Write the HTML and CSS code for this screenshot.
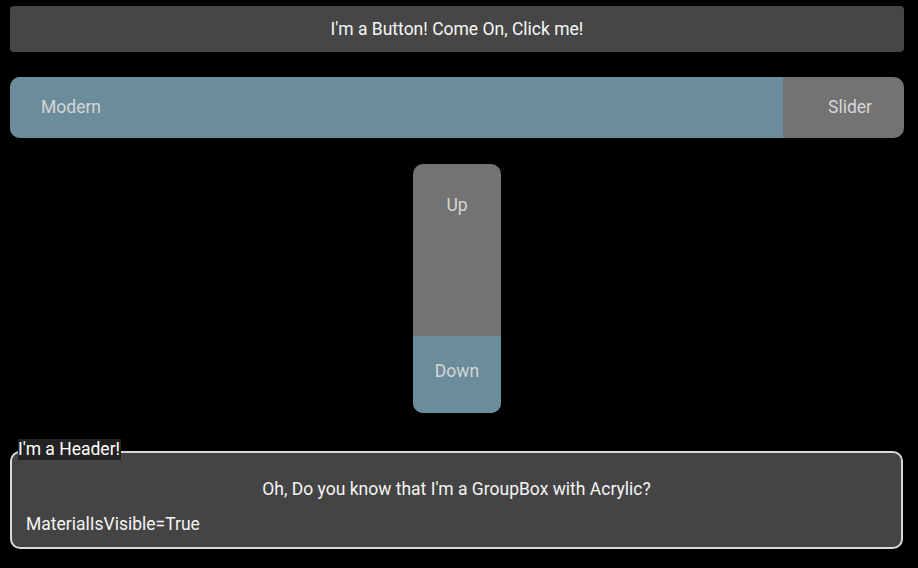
FILE: index.html
```html
<!DOCTYPE html>
<html>
<head>
<meta charset="utf-8">
<link rel="stylesheet" href="styles.css">
</head>
<body>
<div class="page">
  <button class="btn">I'm a Button! Come On, Click me!</button>
  <div class="hslider">
    <div class="hfill" style="width: 86.5%"><span>Modern</span></div>
    <div class="hrest"><span>Slider</span></div>
  </div>
  <div class="vwrap">
    <div class="vslider">
      <div class="vrest"><span>Up</span></div>
      <div class="vfill" style="height: 77px"><span>Down</span></div>
    </div>
  </div>
  <div class="group">
    <div class="group-header">I'm a Header!</div>
    <div class="group-body">
      <div class="group-center">Oh, Do you know that I'm a GroupBox with Acrylic?</div>
      <div class="group-left">MaterialIsVisible=True</div>
    </div>
  </div>
</div>
</body>
</html>
```
FILE: styles.css
```css
html, body {
  margin: 0;
  padding: 0;
  background: #000;
  width: 918px;
  height: 568px;
  overflow: hidden;
  font-family: Roboto, "Noto Sans", sans-serif;
}
.page {
  display: flex;
  flex-direction: column;
  padding: 6px 14px 0 10px;
}
.btn {
  height: 46px;
  border: none;
  border-radius: 4px;
  background: #464646;
  color: #f6f6f6;
  font-family: inherit;
  font-size: 17.5px;
  padding: 0 0 1px;
  margin: 0;
}
.hslider {
  margin-top: 25px;
  height: 61px;
  border-radius: 10px;
  overflow: hidden;
  display: flex;
  background: #737373;
  color: #d6d6d6;
  font-size: 17.5px;
}
.hfill {
  background: #6b8c9a;
  display: flex;
  align-items: center;
  padding-left: 31px;
  padding-bottom: 2px;
  box-sizing: border-box;
}
.hrest {
  flex: 1;
  display: flex;
  align-items: center;
  justify-content: flex-end;
  padding-right: 32px;
  padding-bottom: 2px;
}
.vwrap {
  display: flex;
  justify-content: center;
  margin-top: 26px;
}
.vslider {
  width: 88px;
  height: 249px;
  border-radius: 10px;
  overflow: hidden;
  display: flex;
  flex-direction: column;
  background: #737373;
  color: #d6d6d6;
  font-size: 17.5px;
}
.vrest {
  flex: 1;
  display: flex;
  justify-content: center;
  padding-top: 31px;
}
.vfill {
  background: #6b8c9a;
  display: flex;
  justify-content: center;
  align-items: center;
  padding-bottom: 7px;
  box-sizing: border-box;
}
.group {
  position: relative;
  margin-top: 38px;
  margin-right: 1px;
  height: 98px;
  box-sizing: border-box;
  border: 2px solid #d9d9d9;
  border-radius: 10px;
  background: #444;
  color: #f4f4f4;
  font-size: 17.5px;
}
.group-header {
  position: absolute;
  left: 6px;
  top: -14px;
  height: 21px;
  line-height: 21px;
  background: #232323;
  color: #fff;
  padding-right: 1px;
  font-size: 17.5px;
}
.group-body {
  display: flex;
  flex-direction: column;
  padding: 26px 14px 0;
  gap: 14px;
}
.group-center {
  text-align: center;
  line-height: 21px;
}
.group-left {
  line-height: 21px;
}
```
